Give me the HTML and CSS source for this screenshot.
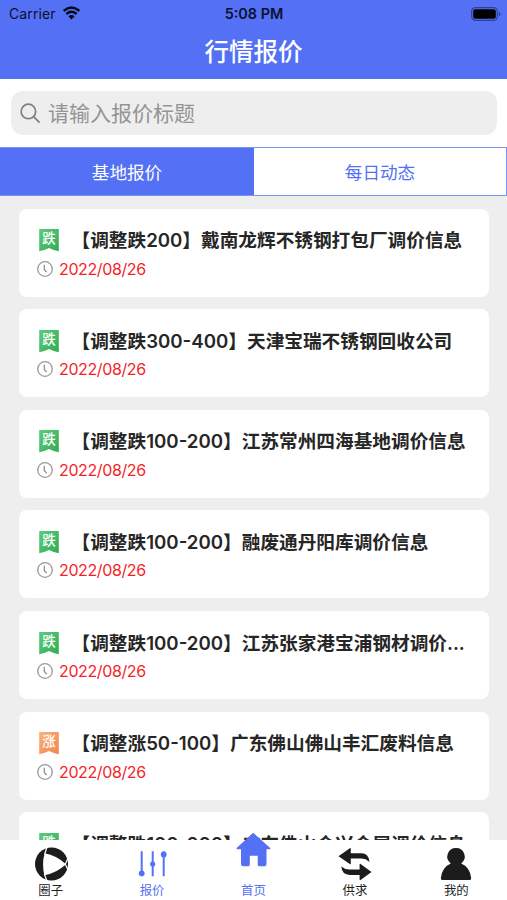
FILE: index.html
```html
<!DOCTYPE html>
<html lang="zh-CN">
<head>
<meta charset="utf-8">
<title>行情报价</title>
<link rel="stylesheet" href="styles.css">
</head>
<body>
<svg class="defs" width="0" height="0" aria-hidden="true">
  <defs>
    <linearGradient id="green" x1="0" y1="0" x2="1" y2="1"><stop offset="0" stop-color="#5ccb7c"/><stop offset="1" stop-color="#32ac55"/></linearGradient>
    <linearGradient id="orange" x1="0" y1="0" x2="1" y2="1"><stop offset="0" stop-color="#f9b375"/><stop offset="1" stop-color="#f48351"/></linearGradient>
    <symbol id="ribbon" viewBox="0 0 20 23"><path d="M.2 0h19.6v22.3Q14.5 21 10 18.9 5.5 21 .2 22.3z"/></symbol>
    <symbol id="clock" viewBox="0 0 16 16"><circle cx="8" cy="8" r="7.3" fill="none" stroke="#999" stroke-width="1.3"/><path d="M7.3 3.8v4.7l2.4 2.7" fill="none" stroke="#888" stroke-width="1.2"/></symbol>
  </defs>
</svg>
<div class="app">
  <header class="header">
    <div class="status">
      <div class="carrier">Carrier
        <svg class="wifi" viewBox="0 0 18 14"><path class="wave" d="M1.1 4.9Q9-1.8 16.9 4.9M3.9 8Q9 3.7 14.1 8"/><path d="M9 13.4 5.9 10.2Q9 7.6 12.1 10.2z"/></svg>
      </div>
      <div class="time">5:08 PM</div>
      <svg class="battery" viewBox="0 0 30 14"><rect x=".7" y=".7" width="25.6" height="12.6" rx="3.6" fill="none" stroke="#303f96" stroke-width="1.2"/><rect x="2.2" y="2.2" width="22.6" height="9.6" rx="2" fill="#000"/><path d="M27.8 4.8q1.7.6 1.7 2.2t-1.7 2.2z" fill="#303f96"/></svg>
    </div>
    <h1 class="title">行情报价</h1>
  </header>
  <div class="search-wrap">
    <div class="search">
      <svg class="lens" viewBox="0 0 22 22"><circle cx="8.8" cy="8.8" r="7.6"/><path d="m14.2 14.2 6.3 6.3"/></svg>
      <span>请输入报价标题</span>
    </div>
  </div>
  <div class="tabs"><div class="tab active">基地报价</div><div class="tab">每日动态</div></div>
  <main class="list">
    <article class="card"><div class="row"><span class="badge"><svg fill="url(#green)"><use href="#ribbon"/></svg><b>跌</b></span><h2>【调整跌200】戴南龙辉不锈钢打包厂调价信息</h2></div><div class="date"><svg><use href="#clock"/></svg>2022/08/26</div></article>
    <article class="card"><div class="row"><span class="badge"><svg fill="url(#green)"><use href="#ribbon"/></svg><b>跌</b></span><h2>【调整跌300-400】天津宝瑞不锈钢回收公司</h2></div><div class="date"><svg><use href="#clock"/></svg>2022/08/26</div></article>
    <article class="card"><div class="row"><span class="badge"><svg fill="url(#green)"><use href="#ribbon"/></svg><b>跌</b></span><h2>【调整跌100-200】江苏常州四海基地调价信息</h2></div><div class="date"><svg><use href="#clock"/></svg>2022/08/26</div></article>
    <article class="card"><div class="row"><span class="badge"><svg fill="url(#green)"><use href="#ribbon"/></svg><b>跌</b></span><h2>【调整跌100-200】融废通丹阳库调价信息</h2></div><div class="date"><svg><use href="#clock"/></svg>2022/08/26</div></article>
    <article class="card"><div class="row"><span class="badge"><svg fill="url(#green)"><use href="#ribbon"/></svg><b>跌</b></span><h2>【调整跌100-200】江苏张家港宝浦钢材调价...</h2></div><div class="date"><svg><use href="#clock"/></svg>2022/08/26</div></article>
    <article class="card"><div class="row"><span class="badge"><svg fill="url(#orange)"><use href="#ribbon"/></svg><b>涨</b></span><h2>【调整涨50-100】广东佛山佛山丰汇废料信息</h2></div><div class="date"><svg><use href="#clock"/></svg>2022/08/26</div></article>
    <article class="card"><div class="row"><span class="badge"><svg fill="url(#green)"><use href="#ribbon"/></svg><b>跌</b></span><h2>【调整跌100-200】广东佛山金兴金属调价信息</h2></div><div class="date"><svg><use href="#clock"/></svg>2022/08/26</div></article>
  </main>
  <nav class="nav">
    <a class="item"><svg viewBox="0 0 36 36"><circle cx="18.5" cy="18" r="16.5" fill="#1c1c1c"/><path d="M11.6 7.2Q23.5 9.3 33 18.2 24 26.8 11.4 29.2 8.6 18 11.6 7.2z" fill="#fff"/><path d="M11.6 8.5 14 1M32.3 18.2 34.8 12.6M32.3 18.2 34.8 23.6M11.3 28 14 35" fill="none" stroke="#fff" stroke-width="1.2"/></svg><span>圈子</span></a>
    <a class="item blue"><svg viewBox="0 0 36 36"><path d="M7.7 5.3v25M18.7 5.3v25M29.7 5.3v25" stroke="#5471f5" stroke-width="2"/><g fill="#5471f5"><circle cx="7.7" cy="27.3" r="2.9"/><circle cx="18.7" cy="18" r="2.6"/><circle cx="29.7" cy="8.5" r="2.9"/></g></svg><span>报价</span></a>
    <a class="item blue home"><svg viewBox="0 0 36 36"><path d="M18.2.8 35.2 16v1.2h-3.7v15q0 2.1-2.1 2.1h-4.8q-1.9 0-1.9-1.9V23.8h-7.9v8.6q0 1.9-1.9 1.9H8.1q-2.1 0-2.1-2.1v-15H1.6V16z" fill="#5471f5"/></svg><span>首页</span></a>
    <a class="item"><svg viewBox="0 0 36 36"><path d="M1.5 10.3 12.8 2.2q1-.4 1 .8v4.3h10.7q7.2 0 8 8.6-3.7-3.4-8-3.4H13.8v5q0 1.2-1 .6z" fill="#1c1c1c"/><path d="M34.5 26 23.6 34q-1 .5-1-.8v-4.3h-9.8q-7.8 0-8.5-8.4 3.4 3 8 3h10.3v-4.8q0-1.2 1-.7z" fill="#1c1c1c"/></svg><span>供求</span></a>
    <a class="item"><svg viewBox="0 0 36 36"><path d="M18 2a8.6 8.6 0 0 1 5.2 15.5Q31.5 21 33.1 31.4 33.4 34 31 34H5Q2.6 34 2.9 31.4 4.5 21 12.8 17.5A8.6 8.6 0 0 1 18 2z" fill="#1c1c1c"/></svg><span>我的</span></a>
  </nav>
</div>
</body>
</html>
```
FILE: styles.css
```css
* { box-sizing: border-box; }
html, body { margin: 0; }
body { font-family: Inter, "Noto Sans CJK SC", sans-serif; background: #eee; }
.defs { position: absolute; }
svg { display: block; flex: none; }
.app { width: 507px; height: 900px; display: flex; flex-direction: column; overflow: hidden; }
.header { flex: none; height: 79px; background: #5471f5; }
.status { height: 27px; padding: 0 6px 0 9px; display: grid; grid-template-columns: 1fr auto 1fr; align-items: center; color: #0b1030; font-size: 14px; }
.carrier { display: flex; align-items: center; gap: 6px; letter-spacing: .1px; }
.wifi { width: 19px; height: 14px; margin-top: -1px; fill: #050818; }
.wifi .wave { fill: none; stroke: #050818; stroke-width: 2.4; }
.time { font-weight: 600; padding-right: 2px; font-size: 14.4px; }
.battery { width: 30px; height: 14px; justify-self: end; }
.title { margin: 0; height: 50px; line-height: 50px; text-align: center; font-size: 24.5px; font-weight: 500; color: #fff; }
.search-wrap { flex: none; height: 68px; padding: 12px 10px 0 11px; background: #fff; }
.search { height: 44px; border-radius: 12px; background: #eee; display: flex; align-items: center; gap: 7px; padding-left: 9px; font-size: 21px; line-height: 44px; color: #949494; }
.search span { padding-top: 2px; }
.lens { width: 21px; height: 21px; fill: none; stroke: #808083; stroke-width: 1.8; }
.tabs { flex: none; height: 49px; display: grid; grid-template-columns: 254px 1fr; border: 1px solid #7d92f5; border-left: 0; background: #fff; }
.tab { line-height: 49px; height: 47px; text-align: center; font-size: 17.6px; color: #5471f5; }
.tab.active { background: #5471f5; color: #fff; }
.list { flex: 1; min-height: 0; overflow: hidden; padding: 12.5px 18.5px 0 19px; display: flex; flex-direction: column; gap: 12.67px; }
.card { flex: none; height: 88px; border-radius: 8px; background: #fff; padding: 19px 12px 0 18px; }
.row { display: flex; height: 27px; align-items: center; }
.badge { position: relative; width: 22px; height: 23px; margin: -1px 11.5px 0 1px; flex: none; }
.badge svg { width: 22px; height: 23px; }
.badge b { position: absolute; inset: 0; line-height: 19px; text-align: center; font-size: 13.5px; font-weight: 500; color: #fff; }
h2 { margin: 0; font-size: 18.67px; line-height: 28px; font-weight: 600; color: #262626; white-space: nowrap; }
.date { display: flex; align-items: center; gap: 6px; height: 28px; font-size: 16px; letter-spacing: -.38px; color: #f51f28; }
.date svg { width: 16px; height: 16px; }
.nav { flex: none; height: 60px; background: #fff; display: grid; grid-template-columns: repeat(5, 1fr); z-index: 1; }
.item { display: flex; flex-direction: column; align-items: center; color: #222; font-size: 12.4px; }
.item svg { width: 36px; height: 36px; margin-top: 6px; }
.item span { line-height: 18px; }
.item.blue { color: #5471f5; }
.item.home svg { margin-top: -8px; margin-bottom: 14px; }
```
